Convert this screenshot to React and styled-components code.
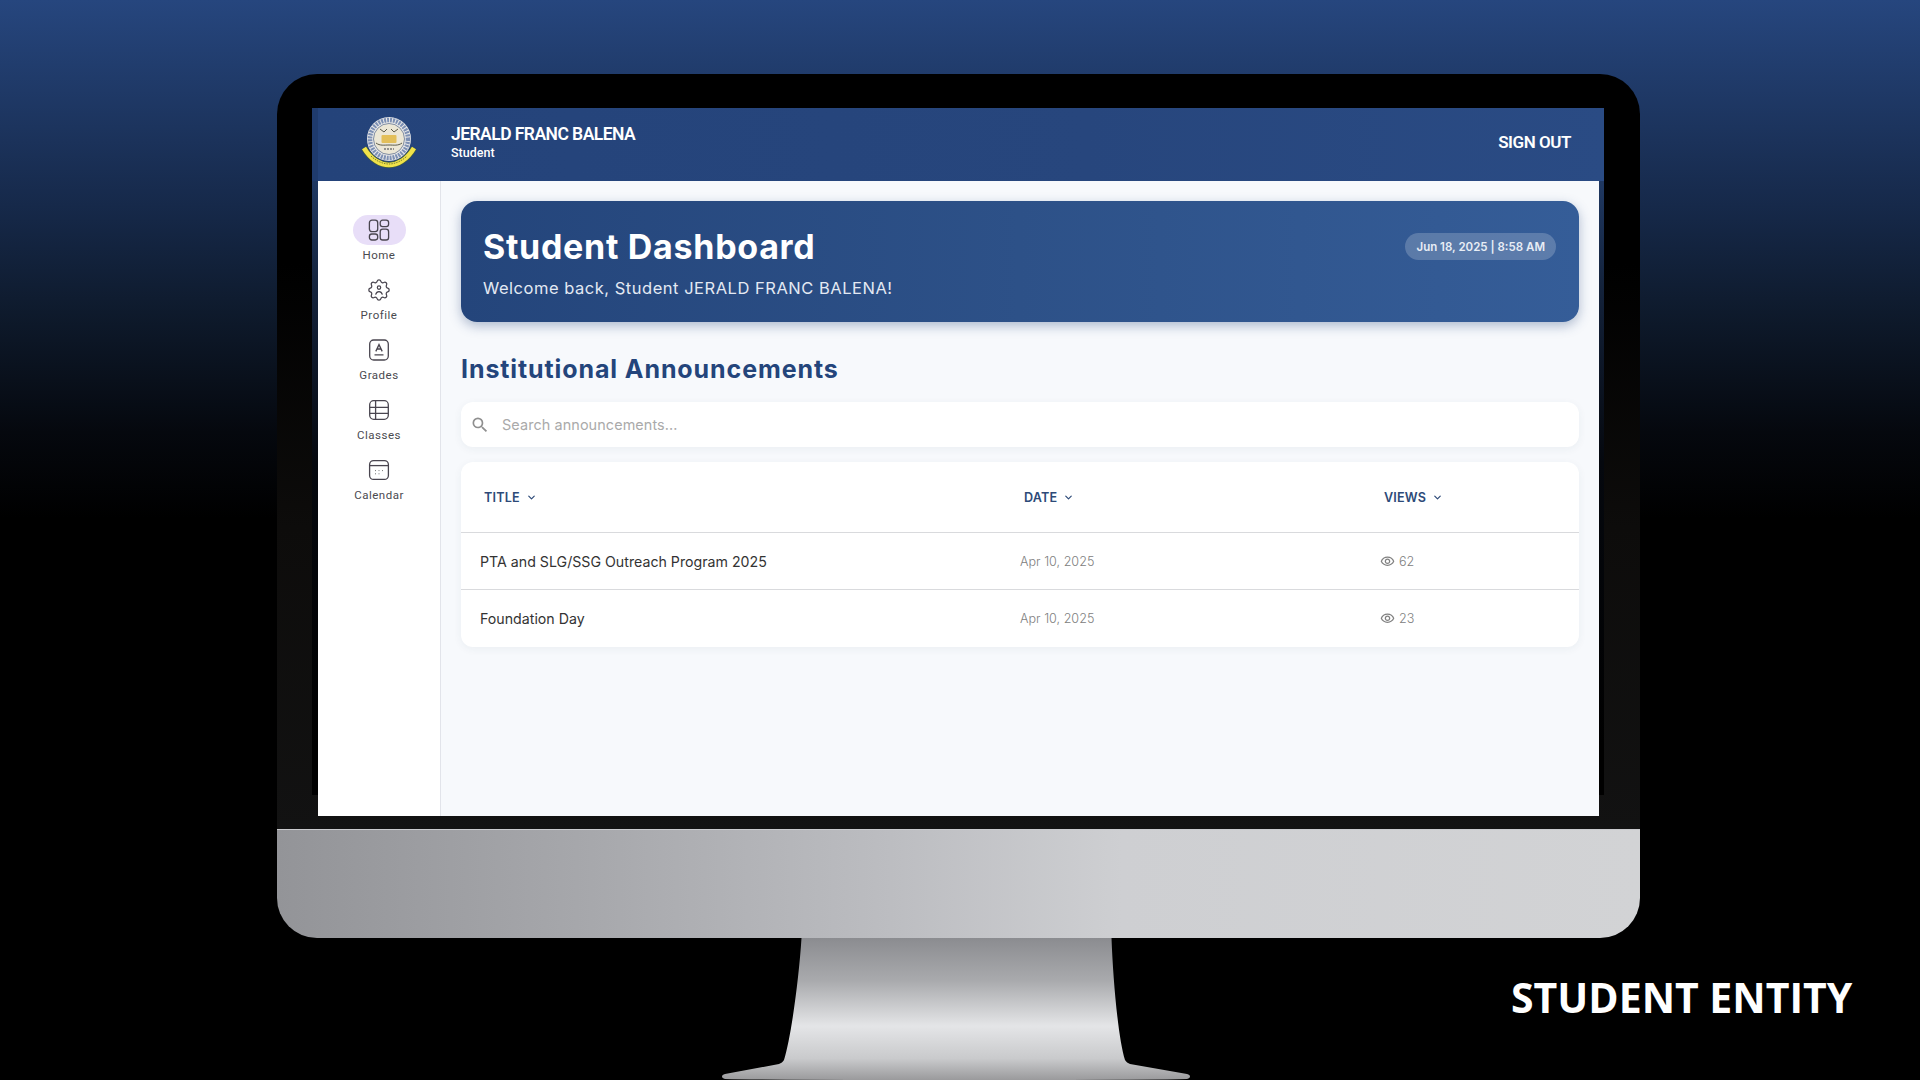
import styled, { createGlobalStyle } from 'styled-components';
import { ChevronDown } from 'lucide-react';
import { MdOutlineVisibility, MdSearch } from 'react-icons/md';

const GlobalStyle = createGlobalStyle`
  html, body {
    margin: 0;
    padding: 0;
    background: #000;
  }
  * { box-sizing: border-box; }
`;

const UI_FONT = `Inter, "Open Sans", sans-serif`;
const BAR_FONT = `Roboto, "Liberation Sans", sans-serif`;

const Stage = styled.div`
  position: relative;
  width: 1920px;
  height: 1080px;
  overflow: hidden;
  padding: 74px 280px 0 277px;
  background: linear-gradient(180deg, #26467e 0%, #16294a 19%, #0e1a2c 29%, #05080e 40%, #000 48%);
`;

const Bezel = styled.div`
  height: 755px;
  padding: 34px 36px 13px 35px;
  border-radius: 40px 40px 0 0;
  background: linear-gradient(180deg, #000 0%, #000 25%, #0d0c0b 60%, #121212 100%);
`;

const Frame = styled.div`
  height: 708px;
  padding: 0 5px 0 6px;
  background: linear-gradient(180deg, #27477d 0%, #14233c 25%, #05080e 50%, #000 90%, #000 97%, transparent 97%);
  display: flex;
  flex-direction: column;
`;

const TopBar = styled.header`
  height: 73px;
  flex: none;
  margin: 0 -5px 0 -6px;
  padding: 0 33px 5px 49px;
  display: flex;
  align-items: center;
  background: linear-gradient(90deg, #1f3b6d 0, #1f3b6d 6px, #24437a 6px, #27467d 60%, #2a4b84 100%);
  color: #fff;
  font-family: ${BAR_FONT};
`;

const LogoSlot = styled.div`
  width: 56px;
  height: 52px;
  flex: none;
  margin-right: 34px;
`;

const UserBlock = styled.div`
  flex: 1;
  margin-top: -1px;
`;

const UserName = styled.div`
  font-size: 17.5px;
  line-height: 21px;
  font-weight: 600;
  letter-spacing: -0.55px;
`;

const UserRole = styled.div`
  font-size: 12.5px;
  line-height: 15px;
  font-weight: 500;
`;

const SignOut = styled.button`
  border: 0;
  padding: 0;
  background: none;
  color: #fff;
  font: 600 17px ${BAR_FONT};
  letter-spacing: -0.45px;
`;

const AppBody = styled.div`
  flex: 1;
  min-height: 0;
  height: 635px;
  display: flex;
  background: #f7f9fc;
`;

const SideNav = styled.nav`
  width: 123px;
  flex: none;
  padding-top: 34px;
  display: flex;
  flex-direction: column;
  align-items: center;
  background: #fff;
  border-right: 1px solid #e2e4ea;
`;

const NavItem = styled.a`
  height: 60px;
  display: flex;
  flex-direction: column;
  align-items: center;
  font: 400 11.5px/16px ${BAR_FONT};
  letter-spacing: 0.5px;
  color: #4a4a50;
`;

const NavIcon = styled.span`
  width: 53px;
  height: 30px;
  margin-bottom: 2px;
  display: flex;
  align-items: center;
  justify-content: center;
  border-radius: 15px;
  color: #49454f;
  background: ${({ $active }) => ($active ? '#e8def8' : 'transparent')};
`;

const Main = styled.main`
  flex: 1;
  padding: 20px 20px 0 20px;
  font-family: ${UI_FONT};
`;

const Hero = styled.section`
  height: 121px;
  padding: 25px 23px 0 22px;
  display: flex;
  justify-content: space-between;
  align-items: flex-start;
  border-radius: 16px;
  color: #fff;
  background: linear-gradient(90deg, #24457b 0%, #2d5188 50%, #355d98 100%);
  box-shadow: 0 4px 12px rgba(36, 69, 123, 0.35);
`;

const HeroTitle = styled.h1`
  margin: 0 0 9px;
  font-size: 34px;
  line-height: 42px;
  font-weight: 700;
  letter-spacing: 0.7px;
`;

const HeroText = styled.p`
  margin: 0;
  font-size: 16.5px;
  line-height: 22px;
  font-weight: 400;
  letter-spacing: 0.52px;
  color: #e3e9f3;
`;

const DatePill = styled.span`
  margin-top: 7px;
  height: 27px;
  padding: 0 11px;
  display: flex;
  align-items: center;
  border-radius: 14px;
  font-size: 11.5px;
  font-weight: 600;
  color: #e8edf5;
  background: rgba(255, 255, 255, 0.2);
`;

const SectionTitle = styled.h2`
  margin: 32px 0 18px;
  font-size: 25px;
  line-height: 30px;
  font-weight: 700;
  letter-spacing: 0.9px;
  color: #24457b;
`;

const SearchBox = styled.div`
  height: 45px;
  margin-bottom: 15px;
  padding: 0 9px;
  display: flex;
  align-items: center;
  gap: 12px;
  border-radius: 12px;
  background: #fff;
  color: #8f8f8f;
  box-shadow: 0 2px 8px rgba(40, 60, 90, 0.06);
`;

const SearchInput = styled.input`
  flex: 1;
  border: 0;
  outline: 0;
  padding: 0;
  background: none;
  font: 400 14.4px ${UI_FONT};
  letter-spacing: 0.1px;
  &::placeholder { color: #aaaaaa; }
`;

const TableCard = styled.div`
  border-radius: 12px;
  overflow: hidden;
  background: #fff;
  box-shadow: 0 2px 8px rgba(40, 60, 90, 0.06);
`;

const Row = styled.div`
  display: grid;
  grid-template-columns: 540px 360px 1fr;
  align-items: center;
  height: ${({ $head }) => ($head ? '71px' : '57px')};
  border-bottom: ${({ $last }) => ($last ? '0' : '1px solid #d9dadd')};
`;

const HeadCell = styled.div`
  padding-left: 23px;
  display: flex;
  align-items: center;
  gap: 6px;
  font-size: 12.6px;
  font-weight: 600;
  letter-spacing: 0.2px;
  color: #2d4a78;
`;

const TitleCell = styled.div`
  padding-left: 19px;
  font-size: 14.2px;
  color: #333;
`;

const MutedCell = styled.div`
  padding-left: 19px;
  display: flex;
  align-items: center;
  gap: 4px;
  font-size: 12.6px;
  font-weight: 300;
  color: #808080;
`;

const Stand = styled.svg`
  display: block;
  margin-left: 440px;
  width: 480px;
  height: 142px;
`;

const Chin = styled.div`
  height: 109px;
  border-top: 1px solid #c9cacd;
  border-radius: 0 0 40px 40px;
  background: linear-gradient(90deg, #939498 0%, #a6a7ab 22%, #bcbdc1 45%, #cecfd2 62%, #d2d3d5 100%);
`;

const Caption = styled.div`
  position: absolute;
  left: 1511px;
  top: 972px;
  font: 700 41px/50px "Open Sans", sans-serif;
  color: #fff;
  white-space: nowrap;
`;

function SchoolSeal() {
  return (
    <svg width="56" height="52" viewBox="0 0 56 52">
      <circle cx="28" cy="23" r="22" fill="#e8e8e8" />
      <circle cx="28" cy="23" r="19" fill="none" stroke="#7d90b4" strokeWidth="4.5" strokeDasharray="2 1" />
      <circle cx="28" cy="23" r="15.5" fill="#ece7d6" stroke="#39507c" strokeWidth="0.6" />
      <rect x="20.5" y="19" width="15" height="8" rx="1" fill="#e3bf5a" />
      <path d="M15 27c4 3 8 2 13 2s9 1 13-2M19 13l4 3 3-3M30 13l3 3 4-3" fill="none" stroke="#4b4a3a" strokeWidth="0.9" />
      <path d="M23 33h10" stroke="#777" strokeWidth="1.6" strokeDasharray="2 1" />
      <path d="M3 32C10 44 20 49 28 49S46 44 53 32" fill="none" stroke="#46603a" strokeWidth="6" />
      <path d="M3 32C10 44 20 49 28 49S46 44 53 32" fill="none" stroke="#f0e24a" strokeWidth="4.6" />
      <path d="M10 40c5 5 12 8 18 8s13-3 18-8" fill="none" stroke="#7c8236" strokeWidth="1" strokeDasharray="1.5 1" />
    </svg>
  );
}

function HomeIcon() {
  return (
    <svg width="24" height="24" viewBox="0 0 24 24" fill="none" stroke="currentColor" strokeWidth="1.3">
      <rect x="2.4" y="2.2" width="8.3" height="11.5" rx="2.6" />
      <rect x="13.2" y="2.2" width="8.4" height="6.5" rx="2.4" />
      <rect x="2.4" y="16" width="8.3" height="6" rx="2.4" />
      <rect x="13.2" y="11.2" width="8.4" height="10.8" rx="2.6" />
    </svg>
  );
}

function ProfileIcon() {
  return (
    <svg width="24" height="24" viewBox="0 0 24 24" fill="none" stroke="currentColor" strokeWidth="1.2">
      <path
        transform="translate(-1.6 -1.6) scale(1.133)"
        strokeWidth="1.1"
        d="M10.325 4.317c.426 -1.756 2.924 -1.756 3.35 0a1.724 1.724 0 0 0 2.573 1.066c1.543 -.94 3.31 .826 2.37 2.37a1.724 1.724 0 0 0 1.065 2.572c1.756 .426 1.756 2.924 0 3.35a1.724 1.724 0 0 0 -1.066 2.573c.94 1.543 -.826 3.31 -2.37 2.37a1.724 1.724 0 0 0 -2.572 1.065c-.426 1.756 -2.924 1.756 -3.35 0a1.724 1.724 0 0 0 -2.573 -1.066c-1.543 .94 -3.31 -.826 -2.37 -2.37a1.724 1.724 0 0 0 -1.065 -2.572c-1.756 -.426 -1.756 -2.924 0 -3.35a1.724 1.724 0 0 0 1.066 -2.573c-.94 -1.543 .826 -3.31 2.37 -2.37c1 .608 2.296 .07 2.572 -1.065z"
      />
      <circle cx="12" cy="9.6" r="1.7" />
      <path d="M8.6 16.6c.6-2 1.8-3 3.4-3s2.8 1 3.4 3" />
    </svg>
  );
}

function GradesIcon() {
  return (
    <svg width="24" height="24" viewBox="0 0 24 24" fill="none" stroke="currentColor" strokeWidth="1.3">
      <rect x="2.7" y="2" width="18.6" height="20" rx="4" />
      <path d="M8.8 13.4 12 6.6l3.2 6.8M10 11h4M7.5 16.8h9" />
    </svg>
  );
}

function ClassesIcon() {
  return (
    <svg width="24" height="24" viewBox="0 0 24 24" fill="none" stroke="currentColor" strokeWidth="1.3">
      <rect x="2.7" y="2.7" width="18.6" height="18.6" rx="4" />
      <path d="M2.7 9.3h18.6M2.7 15.3h18.6M8.6 2.7v18.6" />
    </svg>
  );
}

function CalendarIcon() {
  return (
    <svg width="24" height="24" viewBox="0 0 24 24" fill="none" stroke="currentColor" strokeWidth="1.3">
      <rect x="2.6" y="2.6" width="18.8" height="18.8" rx="4" />
      <path d="M2.6 7.6h18.8" />
      <path d="M8 12.6h1M11.5 12.6h1M15 12.6h1M8 15.8h1M11.5 15.8h1" strokeWidth="1" stroke="#777" />
    </svg>
  );
}

const NAV = [
  { label: 'Home', Icon: HomeIcon, active: true },
  { label: 'Profile', Icon: ProfileIcon },
  { label: 'Grades', Icon: GradesIcon },
  { label: 'Classes', Icon: ClassesIcon },
  { label: 'Calendar', Icon: CalendarIcon },
];

const ANNOUNCEMENTS = [
  { title: 'PTA and SLG/SSG Outreach Program 2025', date: 'Apr 10, 2025', views: 62 },
  { title: 'Foundation Day', date: 'Apr 10, 2025', views: 23 },
];

export default function App() {
  return (
    <Stage>
      <GlobalStyle />
      <Bezel>
        <Frame>
          <TopBar>
            <LogoSlot>
              <SchoolSeal />
            </LogoSlot>
            <UserBlock>
              <UserName>JERALD FRANC BALENA</UserName>
              <UserRole>Student</UserRole>
            </UserBlock>
            <SignOut>SIGN OUT</SignOut>
          </TopBar>
          <AppBody>
            <SideNav>
              {NAV.map(({ label, Icon, active }) => (
                <NavItem key={label}>
                  <NavIcon $active={active}>
                    <Icon />
                  </NavIcon>
                  {label}
                </NavItem>
              ))}
            </SideNav>
            <Main>
              <Hero>
                <div>
                  <HeroTitle>Student Dashboard</HeroTitle>
                  <HeroText>Welcome back, Student JERALD FRANC BALENA!</HeroText>
                </div>
                <DatePill>Jun 18, 2025 | 8:58 AM</DatePill>
              </Hero>
              <SectionTitle>Institutional Announcements</SectionTitle>
              <SearchBox>
                <MdSearch size={20} />
                <SearchInput placeholder="Search announcements..." readOnly />
              </SearchBox>
              <TableCard>
                <Row $head>
                  <HeadCell>
                    TITLE <ChevronDown size={11} strokeWidth={2.6} />
                  </HeadCell>
                  <HeadCell>
                    DATE <ChevronDown size={11} strokeWidth={2.6} />
                  </HeadCell>
                  <HeadCell>
                    VIEWS <ChevronDown size={11} strokeWidth={2.6} />
                  </HeadCell>
                </Row>
                {ANNOUNCEMENTS.map((item, i) => (
                  <Row key={item.title} $last={i === ANNOUNCEMENTS.length - 1}>
                    <TitleCell>{item.title}</TitleCell>
                    <MutedCell>{item.date}</MutedCell>
                    <MutedCell>
                      <MdOutlineVisibility size={15} />
                      {item.views}
                    </MutedCell>
                  </Row>
                ))}
              </TableCard>
            </Main>
          </AppBody>
        </Frame>
      </Bezel>
      <Chin />
      <Stand viewBox="0 0 480 142">
        <defs>
          <linearGradient id="neckFill" x1="0" y1="0" x2="0" y2="1">
            <stop offset="0" stopColor="#8b8c90" />
            <stop offset="0.3" stopColor="#a9aaad" />
            <stop offset="0.62" stopColor="#e4e5e7" />
            <stop offset="0.85" stopColor="#c9cacc" />
            <stop offset="1" stopColor="#9a9a9c" />
          </linearGradient>
        </defs>
        <path
          d="M84.5 0 L394.5 0 C396 40 401 100 408 122 C409 124 411 125 413 126 L470 136 C474 137 474 140 470 141 Q440 142 240 142 Q40 142 8 141 C4 140 4 137 8 136 L62 126 C64 125 66 124 67 122 C74 100 82 40 84.5 0 Z"
          fill="url(#neckFill)"
        />
      </Stand>
      <Caption>STUDENT ENTITY</Caption>
    </Stage>
  );
}
